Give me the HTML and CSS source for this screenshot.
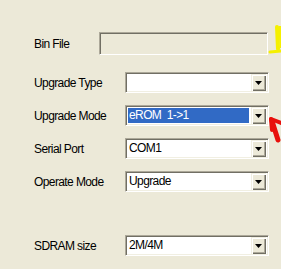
FILE: index.html
```html
<!DOCTYPE html>
<html>
<head>
    <title>Upgrade</title>
    <link rel="stylesheet" href="styles.css">
</head>
<body>
    <div class="panel">
        <div class="row bin-row">
            <span class="label short">Bin File</span>
            <div class="edit"></div>
        </div>
        <div class="row">
            <span class="label">Upgrade Type</span>
            <div class="combo">
                <span class="value"></span>
                <span class="drop"><svg width="7" height="4" viewBox="0 0 7 4"><path d="M0 0H7L3.5 4Z" fill="#000"/></svg></span>
            </div>
        </div>
        <div class="row">
            <span class="label">Upgrade Mode</span>
            <div class="combo">
                <span class="value selected">eROM&nbsp; 1-&gt;1</span>
                <span class="drop"><svg width="7" height="4" viewBox="0 0 7 4"><path d="M0 0H7L3.5 4Z" fill="#000"/></svg></span>
            </div>
        </div>
        <div class="row">
            <span class="label">Serial Port</span>
            <div class="combo">
                <span class="value">COM1</span>
                <span class="drop"><svg width="7" height="4" viewBox="0 0 7 4"><path d="M0 0H7L3.5 4Z" fill="#000"/></svg></span>
            </div>
        </div>
        <div class="row">
            <span class="label">Operate Mode</span>
            <div class="combo">
                <span class="value">Upgrade</span>
                <span class="drop"><svg width="7" height="4" viewBox="0 0 7 4"><path d="M0 0H7L3.5 4Z" fill="#000"/></svg></span>
            </div>
        </div>
        <div class="row sdram-row">
            <span class="label">SDRAM size</span>
            <div class="combo">
                <span class="value">2M/4M</span>
                <span class="drop"><svg width="7" height="4" viewBox="0 0 7 4"><path d="M0 0H7L3.5 4Z" fill="#000"/></svg></span>
            </div>
        </div>
    </div>

    <!-- marker scribbles drawn over the screenshot -->
    <svg class="marks" width="14" height="130" viewBox="267 20 14 130">
        <path d="M277 27 L278 49" stroke="#f5f000" stroke-width="4" fill="none" stroke-linecap="round"/>
        <path d="M280 26 L281 48" stroke="#f5f000" stroke-width="3" fill="none"/>
        <path d="M270 52 L281 51" stroke="#f5f000" stroke-width="3" fill="none" stroke-linecap="round"/>
        <path d="M271 119 L281 123" stroke="#e8100c" stroke-width="4" fill="none" stroke-linecap="round"/>
        <path d="M271 119 L272 130" stroke="#e8100c" stroke-width="4" fill="none" stroke-linecap="round"/>
        <path d="M272 121 L278 140" stroke="#e8100c" stroke-width="5" fill="none" stroke-linecap="round"/>
    </svg>
</body>
</html>
```

FILE: styles.css
```css
body {
    margin: 0;
    background-color: #ece9d8;
    font-family: "Liberation Sans", Arial, sans-serif;
    font-size: 12px;
    letter-spacing: -0.6px;
    color: #000;
    position: relative;
    height: 269px;
    overflow: hidden;
}
.panel {
    display: flex;
    flex-direction: column;
    gap: 12px;
    padding: 32px 0 0 34px;
}
.row {
    display: flex;
    align-items: center;
    height: 21px;
}
.bin-row {
    height: 23px;
    margin-bottom: 5px;
}
.sdram-row {
    margin-top: 31px;
}
.label {
    width: 91px;
    flex: none;
}
.label.short {
    width: 65px;
}
.edit {
    width: 169px;
    height: 23px;
    box-sizing: border-box;
    border: 1px solid;
    border-color: #aca899 #fff #fff #aca899;
    box-shadow: inset 1px 1px #716f64;
    background-color: #ece9d8;
}
.combo {
    width: 144px;
    height: 21px;
    box-sizing: border-box;
    border: 1px solid;
    border-color: #aca899 #fff #fff #aca899;
    box-shadow: inset 1px 1px #716f64, inset -1px -1px #f1efe2;
    background-color: #fff;
    display: flex;
    align-items: center;
    padding: 2px;
}
.value {
    flex: 1;
    height: 15px;
    line-height: 15px;
    padding-left: 1px;
    margin-right: 2px;
    white-space: pre;
}
.value.selected {
    background-color: #316ac5;
    color: #fff;
}
.drop {
    width: 15px;
    height: 17px;
    box-sizing: border-box;
    background-color: #ece9d8;
    box-shadow: inset 1px 1px #f1efe2, inset 2px 2px #fff, inset -1px -1px #716f64, inset -2px -2px #aca899;
    display: flex;
    align-items: center;
    justify-content: center;
}
.marks {
    position: absolute;
    left: 267px;
    top: 20px;
}
```
